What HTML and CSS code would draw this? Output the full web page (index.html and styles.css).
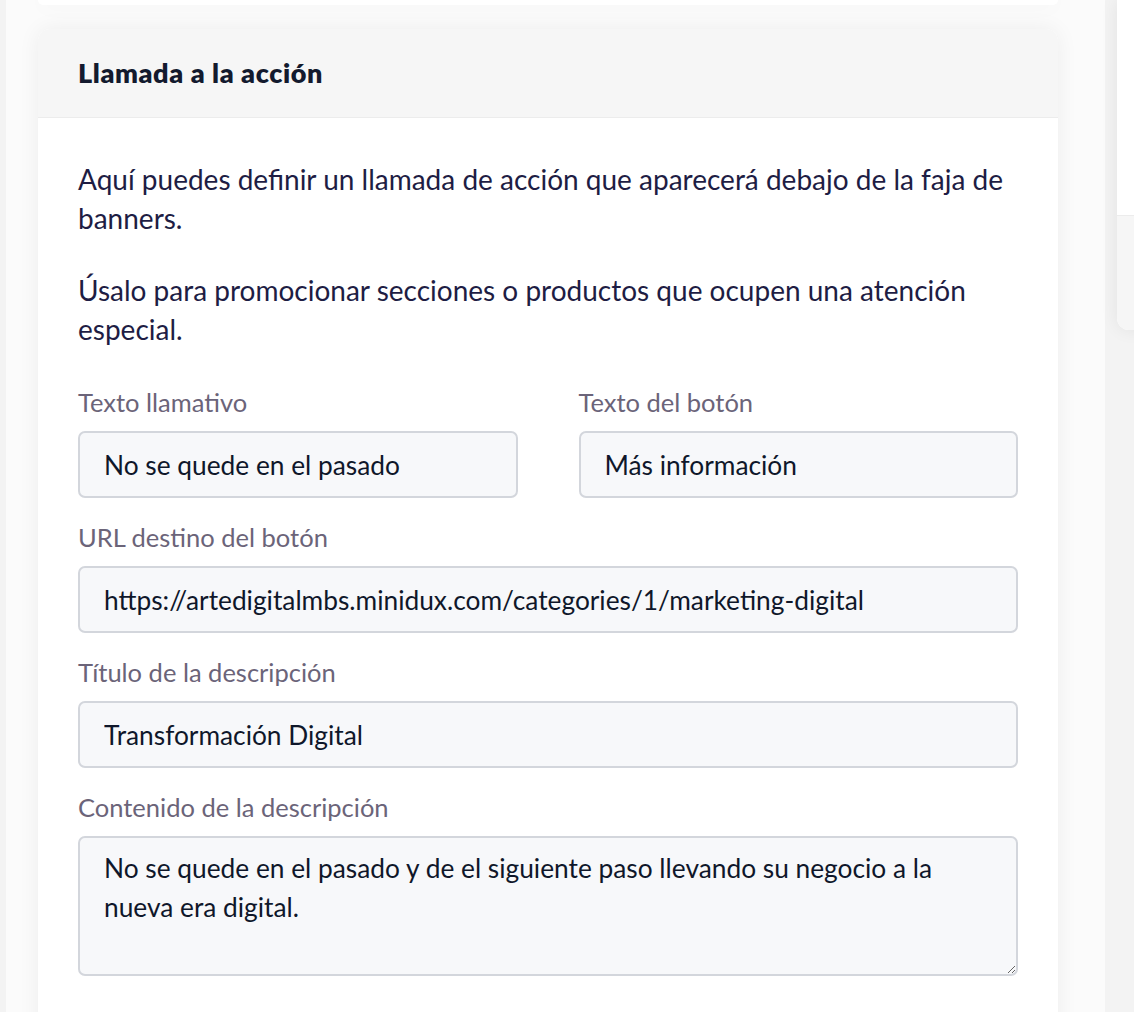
FILE: index.html
```html
<!DOCTYPE html>
<html lang="es">
<head>
<meta charset="utf-8">
<title>Llamada a la acción</title>
<link rel="stylesheet" href="styles.css">
</head>
<body>
<div class="page">
  <main class="main">
    <div class="card card-top"></div>
    <section class="card">
      <header class="card-header">
        <h2 class="card-title">Llamada a la acción</h2>
      </header>
      <div class="card-body">
        <p class="intro">Aquí puedes definir un llamada de acción que aparecerá debajo de la faja de banners.</p>
        <p class="intro">Úsalo para promocionar secciones o productos que ocupen una atención especial.</p>
        <div class="row">
          <div class="field">
            <label class="label" for="f1">Texto llamativo</label>
            <input class="input" id="f1" type="text" value="No se quede en el pasado">
          </div>
          <div class="field">
            <label class="label" for="f2">Texto del botón</label>
            <input class="input" id="f2" type="text" value="Más información">
          </div>
        </div>
        <div class="field">
          <label class="label" for="f3">URL destino del botón</label>
          <input class="input" id="f3" type="text" value="https://artedigitalmbs.minidux.com/categories/1/marketing-digital">
        </div>
        <div class="field">
          <label class="label" for="f4">Título de la descripción</label>
          <input class="input" id="f4" type="text" value="Transformación Digital">
        </div>
        <div class="field">
          <label class="label" for="f5">Contenido de la descripción</label>
          <textarea class="input textarea" id="f5">No se quede en el pasado y de el siguiente paso llevando su negocio a la nueva era digital.</textarea>
        </div>
      </div>
    </section>
  </main>
  <aside class="side">
    <div class="side-card">
      <div class="side-top"></div>
      <div class="side-foot"></div>
    </div>
  </aside>
</div>
</body>
</html>
```

FILE: styles.css
```css
* { box-sizing: border-box; }
html, body {
  margin: 0;
  height: 100%;
  overflow: hidden;
}
body {
  background: #f3f3f3;
  font-family: Lato, "Noto Sans", sans-serif;
  color: #1f1e45;
}
.page {
  display: flex;
  height: 1012px;
}
.main {
  flex: 0 0 1099px;
  margin-left: 6px;
  background: #fbfbfb;
  padding: 0 47px 0 32px;
}
.card {
  background: #fff;
  border-radius: 12px;
  box-shadow: 0 0 22px rgba(0, 0, 0, 0.06);
}
.card-top {
  height: 5px;
  border-radius: 0 0 12px 12px;
  margin-bottom: 24px;
}
.card-header {
  background: #f6f6f6;
  height: 89px;
  border-bottom: 1px solid #ececec;
  border-radius: 12px 12px 0 0;
  display: flex;
  align-items: center;
  padding: 0 40px;
}
.card-title {
  margin: 0;
  font-size: 27px;
  font-weight: 800;
  letter-spacing: 0.6px;
  color: #131a2e;
  margin-top: -2px;
}
.card-body {
  padding: 42px 40px 40px;
}
.intro {
  margin: 0 0 34px;
  font-size: 28px;
  line-height: 38.5px;
  color: #1e1d44;
}
.row {
  display: grid;
  grid-template-columns: 1fr 1fr;
  column-gap: 61px;
  padding-top: 5px;
}
.field {
  display: flex;
  flex-direction: column;
  margin-bottom: 24px;
}
.label {
  font-size: 25.5px;
  line-height: 30px;
  color: #6b6479;
  margin-bottom: 14px;
}
.input {
  height: 67px;
  border: 2px solid #d3d6dc;
  border-radius: 7px;
  background: #f7f8fa;
  padding: 0 24px;
  font-family: inherit;
  font-size: 26.3px;
  color: #0f172a;
  outline: none;
  width: 100%;
}
.textarea {
  height: 140px;
  padding: 11px 24px;
  line-height: 39px;
  resize: vertical;
}
.side {
  flex: 0 0 auto;
  width: 320px;
  margin-left: 12px;
}
.side-card {
  background: #fff;
  border-radius: 0 0 12px 12px;
  box-shadow: 0 0 18px rgba(0, 0, 0, 0.07);
  overflow: hidden;
}
.side-top {
  height: 216px;
  border-bottom: 1px solid #ececec;
}
.side-foot {
  height: 114px;
  background: #f6f6f6;
}
```
